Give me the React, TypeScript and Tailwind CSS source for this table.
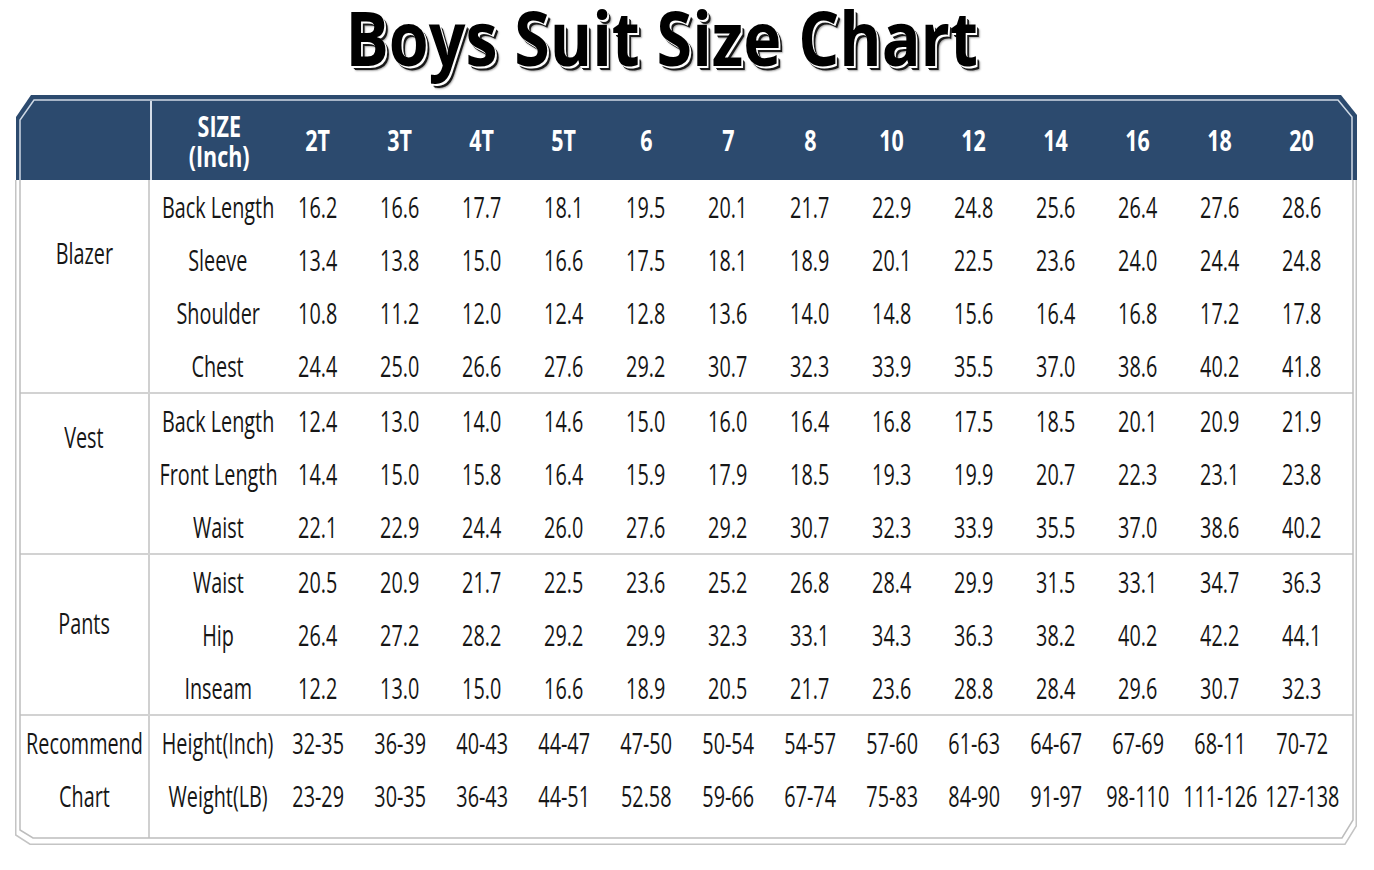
import React from "react";

const sizes = ["2T", "3T", "4T", "5T", "6", "7", "8", "10", "12", "14", "16", "18", "20"];

type Row = { label: string; values: string[] };
type Group = { name: string[]; pt: string; rows: Row[]; last?: boolean };

const groups: Group[] = [
  {
    name: ["Blazer"],
    pt: "pt-[57px]",
    rows: [
      { label: "Back Length", values: "16.2 16.6 17.7 18.1 19.5 20.1 21.7 22.9 24.8 25.6 26.4 27.6 28.6".split(" ") },
      { label: "Sleeve", values: "13.4 13.8 15.0 16.6 17.5 18.1 18.9 20.1 22.5 23.6 24.0 24.4 24.8".split(" ") },
      { label: "Shoulder", values: "10.8 11.2 12.0 12.4 12.8 13.6 14.0 14.8 15.6 16.4 16.8 17.2 17.8".split(" ") },
      { label: "Chest", values: "24.4 25.0 26.6 27.6 29.2 30.7 32.3 33.9 35.5 37.0 38.6 40.2 41.8".split(" ") },
    ],
  },
  {
    name: ["Vest"],
    pt: "pt-[27px]",
    rows: [
      { label: "Back Length", values: "12.4 13.0 14.0 14.6 15.0 16.0 16.4 16.8 17.5 18.5 20.1 20.9 21.9".split(" ") },
      { label: "Front Length", values: "14.4 15.0 15.8 16.4 15.9 17.9 18.5 19.3 19.9 20.7 22.3 23.1 23.8".split(" ") },
      { label: "Waist", values: "22.1 22.9 24.4 26.0 27.6 29.2 30.7 32.3 33.9 35.5 37.0 38.6 40.2".split(" ") },
    ],
  },
  {
    name: ["Pants"],
    pt: "pt-[52px]",
    rows: [
      { label: "Waist", values: "20.5 20.9 21.7 22.5 23.6 25.2 26.8 28.4 29.9 31.5 33.1 34.7 36.3".split(" ") },
      { label: "Hip", values: "26.4 27.2 28.2 29.2 29.9 32.3 33.1 34.3 36.3 38.2 40.2 42.2 44.1".split(" ") },
      { label: "Inseam", values: "12.2 13.0 15.0 16.6 18.9 20.5 21.7 23.6 28.8 28.4 29.6 30.7 32.3".split(" ") },
    ],
  },
  {
    name: ["Recommend", "Chart"],
    pt: "pt-0",
    last: true,
    rows: [
      { label: "Height(Inch)", values: "32-35 36-39 40-43 44-47 47-50 50-54 54-57 57-60 61-63 64-67 67-69 68-11 70-72".split(" ") },
      { label: "Weight(LB)", values: "23-29 30-35 36-43 44-51 52.58 59-66 67-74 75-83 84-90 91-97 98-110 111-126 127-138".split(" ") },
    ],
  },
];

function T({ children, bold }: { children: React.ReactNode; bold?: boolean }) {
  return (
    <span
      className={
        bold
          ? "inline-block whitespace-nowrap scale-x-[0.74]"
          : "inline-block whitespace-nowrap scale-x-[0.66]"
      }
    >
      {children}
    </span>
  );
}

export default function App() {
  return (
    <div className="w-[1374px] h-[870px] bg-white text-[#161616] font-['Open_Sans','Noto_Sans',sans-serif] overflow-hidden">
      {/* Title */}
      <div className="h-[95px] flex items-start justify-center pr-[50px]">
        <h1 className="text-[75px] leading-none font-bold text-black [text-shadow:1px_1px_0_#fff,2px_2px_0_#fff,3px_3px_0_#1a1a1a,4px_4px_0_#1a1a1a,5px_5px_2px_rgba(0,0,0,0.35)]">
          <span className="inline-block whitespace-nowrap scale-x-[0.86]">Boys Suit Size Chart</span>
        </h1>
      </div>

      {/* Table frame */}
      <div className="relative ml-[15px] w-[1342px] h-[750px]">
        {/* Header */}
        <div className="ml-[1px] w-[1341px] h-[85px] bg-[#2c4a6e] [clip-path:polygon(0_22px,15px_0,calc(100%-16px)_0,100%_20px,100%_100%,0_100%)] flex pl-[4px] pt-[6px] text-white text-[29px] font-bold">
          <div className="w-[130px]" />
          <div className="w-[127px] border-l-2 border-[#d5dde8] flex flex-col items-center justify-center pl-[9px] leading-[30px] pt-[1px]">
            <T bold>SIZE</T>
            <T bold>(Inch)</T>
          </div>
          {sizes.map((s) => (
            <div key={s} className="w-[82px] flex items-center justify-center pb-[2px]">
              <T bold>{s}</T>
            </div>
          ))}
        </div>

        {/* Body */}
        <div className="ml-[5px] w-[1333px] h-[658px] flex flex-col text-[30px] leading-none">
          {groups.map((g) => (
            <div key={g.name.join(" ")} className={g.last ? "flex flex-1" : "flex border-b-2 border-[#d2d2d2]"}>
              <div className={`w-[130px] border-r-2 border-[#d0d0d0] flex flex-col items-center ${g.pt}`}>
                {g.last ? (
                  g.name.map((n) => (
                    <div key={n} className="h-[53px] flex items-center justify-center">
                      <T>{n}</T>
                    </div>
                  ))
                ) : (
                  <div className="h-[32px] flex items-center justify-center">
                    <T>{g.name[0]}</T>
                  </div>
                )}
              </div>
              <div className="flex flex-col">
                {g.rows.map((r) => (
                  <div key={r.label} className="h-[53px] flex items-center">
                    <div className="w-[127px] flex items-center justify-center pl-[9px]">
                      <T>{r.label}</T>
                    </div>
                    {r.values.map((v, i) => (
                      <div key={i} className="w-[82px] flex items-center justify-center">
                        <T>{v}</T>
                      </div>
                    ))}
                  </div>
                ))}
              </div>
            </div>
          ))}
        </div>

        {/* Frame outline drawing */}
        <svg className="absolute inset-0 pointer-events-none" width="1342" height="750" viewBox="0 0 1342 750">
          <polyline points="0.75,85 0.75,740 15,749.25 1330,749.25 1341.25,731 1341.25,85" fill="none" stroke="#c4c4c4" strokeWidth="1.5" />
          <polyline points="5,85 5,735 18,743 1327,743 1338,725 1338,85" fill="none" stroke="#bdbdbd" strokeWidth="1.5" />
          <polyline points="5,85 5,25 19,5 1323,5 1337,22 1337,85" fill="none" stroke="#cfd9e5" strokeWidth="1.5" />
        </svg>
      </div>
    </div>
  );
}
